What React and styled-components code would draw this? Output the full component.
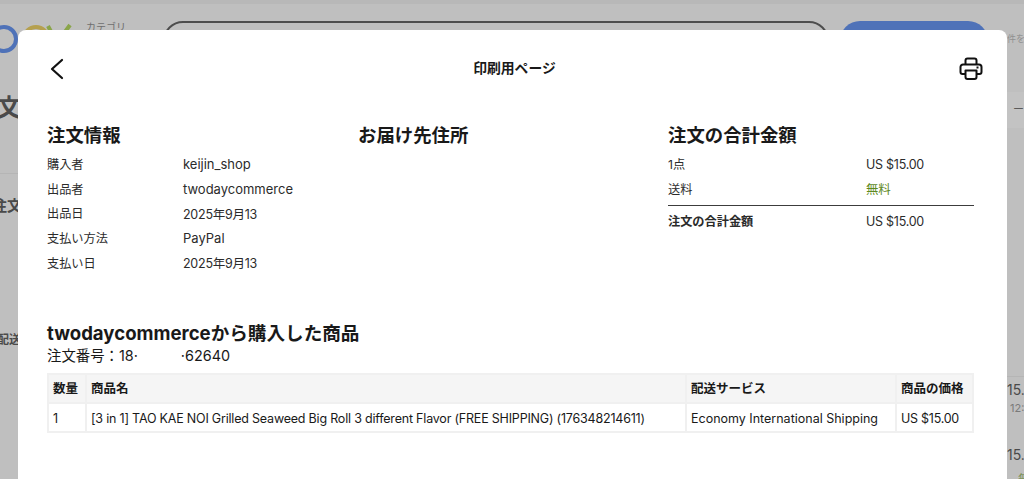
import React from "react";
import styled, { createGlobalStyle } from "styled-components";

const Global = createGlobalStyle`
  html, body { margin: 0; padding: 0; height: 100%; overflow: hidden; background: #bfbfbf; }
  body { font-family: Inter, "Noto Sans CJK JP", sans-serif; color: #191919; }
  * { box-sizing: border-box; }
`;

const Page = styled.div`
  position: relative;
  width: 1024px;
  height: 479px;
  overflow: hidden;
  background: #bfbfbf;
`;

const TopStrip = styled.div`
  height: 4px;
  background: #b8b8b8;
`;

const BgHeader = styled.div`
  display: flex;
  align-items: flex-start;
  height: 88px;
  padding-top: 17px;
`;

const BgLogo = styled.svg`
  width: 80px;
  height: 40px;
  flex: none;
  margin-right: 6px;
`;

const BgCategory = styled.div`
  width: 77px;
  font-size: 10px;
  line-height: 12px;
  color: #6e6e6e;
  flex: none;
`;

const BgSearch = styled.div`
  width: 666px;
  height: 40px;
  border: 2px solid #4d4d4d;
  border-radius: 20px;
  flex: none;
`;

const BgButton = styled.div`
  width: 148px;
  height: 40px;
  margin-left: 11px;
  background: #4f72b8;
  border-radius: 20px;
  flex: none;
`;

const BgHint = styled.div`
  margin: 11px 0 0 19px;
  font-size: 9px;
  line-height: 14px;
  color: #8f8f8f;
  white-space: nowrap;
  flex: none;
`;

const BgBody = styled.div`
  display: flex;
  justify-content: space-between;
`;

const BgLeft = styled.div`
  width: 18px;
  overflow: hidden;
  display: flex;
  flex-direction: column;
  color: #4a4a4a;
  font-weight: 700;
`;

const BgTitle = styled.div`
  font-size: 24px;
  line-height: 30px;
  margin: 1px 0 50px -3px;
  white-space: nowrap;
`;

const BgDivider = styled.div`
  height: 1px;
  background: #b5b5b5;
  flex: none;
`;

const BgLabel = styled.div`
  font-size: ${(p) => p.$size}px;
  line-height: 16px;
  margin-left: ${(p) => p.$indent}px;
  margin-top: ${(p) => p.$gap}px;
  white-space: nowrap;
`;

const BgRight = styled.div`
  width: 17px;
  overflow: hidden;
  white-space: nowrap;
  display: flex;
  flex-direction: column;
`;

const BgBand = styled.div`
  height: 36px;
  background: #c3c3c3;
  margin-bottom: 248px;
  font-size: 11px;
  line-height: 34px;
  color: #5a5a5a;
  text-align: right;
  flex: none;
`;

const BgRightLine = styled.div`
  margin-top: ${(p) => p.$gap}px;
  line-height: 16px;
  color: ${(p) => p.$color || "#4a4a4a"};
  font-size: ${(p) => p.$size || 14}px;
  padding-left: ${(p) => p.$indent || 0}px;
`;

const Modal = styled.section`
  position: absolute;
  left: 18px;
  top: 30px;
  width: 989px;
  height: 470px;
  background: #fff;
  border-radius: 8px 8px 0 0;
  padding: 0 33px 0 29px;
`;

const ModalBar = styled.header`
  display: flex;
  align-items: center;
  justify-content: space-between;
  height: 76px;
  padding-top: 1px;
`;

const IconButton = styled.div`
  width: 28px;
  height: 28px;
  display: flex;
  align-items: center;
  justify-content: center;
  margin-left: ${(p) => p.$ml || 0}px;
  margin-right: ${(p) => p.$mr || 0}px;
`;

const ModalTitle = styled.h1`
  margin: 0 0 1px -2px;
  font-size: 13.8px;
  line-height: 18px;
  font-weight: 700;
  color: #191919;
`;

const Columns = styled.div`
  display: grid;
  grid-template-columns: 311px 310px 306px;
  margin-top: 17px;
`;

const SectionTitle = styled.h2`
  margin: 0 0 5px;
  font-size: 18.4px;
  line-height: 24px;
  font-weight: 700;
  color: #191919;
`;

const Row = styled.div`
  display: grid;
  grid-template-columns: ${(p) => p.$cols};
  height: 24.6px;
  align-items: center;
  font-size: 12.2px;
  color: #2b2b2b;
  font-weight: ${(p) => (p.$bold ? 700 : 400)};
`;

const Value = styled.span`
  font-weight: 400;
  font-size: ${(p) => (p.$tight ? 12.5 : 13)}px;
  letter-spacing: ${(p) => (p.$tight ? -0.25 : 0)}px;
  color: ${(p) => p.$color || "#2b2b2b"};
`;

const Rule = styled.hr`
  margin: 4px 0 3px;
  border: 0;
  border-top: 1px solid #3c3c3c;
`;

const ProductsTitle = styled.h2`
  margin: 46px 0 0;
  font-size: 18.6px;
  line-height: 24px;
  font-weight: 700;
  color: #191919;
`;

const OrderNumber = styled.div`
  font-size: 14.4px;
  line-height: 20px;
  padding-top: 1px;
  color: #191919;
`;

const NumberGap = styled.span`
  display: inline-block;
  width: 43px;
`;

const Table = styled.table`
  margin-top: 7px;
  width: 925px;
  border-collapse: collapse;
  table-layout: fixed;
  font-size: 12.5px;
`;

const Th = styled.th`
  height: 29px;
  padding: 0 4px 2px;
  text-align: left;
  font-weight: 700;
  background: #f5f5f5;
  border: 2px solid #f0f0f0;
  color: #191919;
  white-space: nowrap;
`;

const Td = styled.td`
  height: 29px;
  padding: 3px 4px 0;
  text-align: left;
  background: #fff;
  border: 2px solid #f0f0f0;
  color: #191919;
  white-space: nowrap;
  letter-spacing: ${(p) => p.$spacing || 0}px;
`;

const info = [
  ["購入者", "keijin_shop"],
  ["出品者", "twodaycommerce"],
  ["出品日", "2025年9月13", true],
  ["支払い方法", "PayPal"],
  ["支払い日", "2025年9月13", true],
];

export default function App() {
  return (
    <Page>
      <Global />
      <TopStrip />
      <BgHeader>
        <BgLogo viewBox="0 0 80 40">
          <circle cx="4" cy="18" r="12" fill="none" stroke="#4f72b8" strokeWidth="4" />
          <circle cx="36" cy="18" r="12" fill="none" stroke="#b5a04f" strokeWidth="4" />
          <path d="M48 5l9 17 13-18" fill="none" stroke="#8aa54a" strokeWidth="4" />
        </BgLogo>
        <BgCategory>カテゴリ</BgCategory>
        <BgSearch />
        <BgButton />
        <BgHint>件を</BgHint>
      </BgHeader>
      <BgBody>
        <BgLeft>
          <BgTitle>文</BgTitle>
          <BgDivider />
          <BgLabel $gap={24} $size={15} $indent={-8}>注文</BgLabel>
          <BgLabel $gap={118} $size={12} $indent={-3}>配送</BgLabel>
        </BgLeft>
        <BgRight>
          <BgBand>ー</BgBand>
          <BgDivider />
          <BgRightLine $gap={5}>15.0</BgRightLine>
          <BgRightLine $gap={2} $size={11} $indent={3} $color="#7a7a7a">12:</BgRightLine>
          <BgRightLine $gap={31}>15.0</BgRightLine>
          <BgRightLine $gap={9} $size={12} $indent={11} $color="#7f9560">無料</BgRightLine>
        </BgRight>
      </BgBody>
      <Modal>
        <ModalBar>
          <IconButton $ml={-1}>
            <svg width="28" height="28" viewBox="0 0 28 28" fill="none" stroke="#111" strokeWidth="2.2" strokeLinecap="round" strokeLinejoin="round">
              <path d="M16 5L6 14l10 9" />
            </svg>
          </IconButton>
          <ModalTitle>印刷用ページ</ModalTitle>
          <IconButton $mr={-11}>
            <svg width="24" height="24" viewBox="0 0 24 24" fill="none" stroke="#111" strokeWidth="2" strokeLinejoin="round">
              <path d="M6.5 7.5V3.5a2 2 0 0 1 2-2h7a2 2 0 0 1 2 2v4" />
              <path d="M6.5 17H3.5a2 2 0 0 1-2-2V10a2.5 2.5 0 0 1 2.5-2.5h16a2.5 2.5 0 0 1 2.5 2.5v5a2 2 0 0 1-2 2h-3" />
              <path d="M6.5 13.5h11v6.5a2 2 0 0 1-2 2h-7a2 2 0 0 1-2-2z" />
              <path d="M17.5 10.5h2" />
            </svg>
          </IconButton>
        </ModalBar>
        <Columns>
          <div>
            <SectionTitle>注文情報</SectionTitle>
            {info.map(([k, v, tight]) => (
              <Row key={k} $cols="136px 1fr">
                <span>{k}</span>
                <Value $tight={tight}>{v}</Value>
              </Row>
            ))}
          </div>
          <div>
            <SectionTitle>お届け先住所</SectionTitle>
          </div>
          <div>
            <SectionTitle>注文の合計金額</SectionTitle>
            <Row $cols="198px 1fr">
              <span>1点</span>
              <Value $tight>US $15.00</Value>
            </Row>
            <Row $cols="198px 1fr">
              <span>送料</span>
              <Value $tight $color="#5f8a1e">無料</Value>
            </Row>
            <Rule />
            <Row $cols="198px 1fr" $bold>
              <span>注文の合計金額</span>
              <Value $tight>US $15.00</Value>
            </Row>
          </div>
        </Columns>
        <ProductsTitle>twodaycommerceから購入した商品</ProductsTitle>
        <OrderNumber>
          注文番号：18·<NumberGap />·62640
        </OrderNumber>
        <Table>
          <colgroup>
            <col style={{ width: 38 }} />
            <col style={{ width: 600 }} />
            <col style={{ width: 210 }} />
            <col style={{ width: 77 }} />
          </colgroup>
          <thead>
            <tr>
              <Th>数量</Th>
              <Th>商品名</Th>
              <Th>配送サービス</Th>
              <Th>商品の価格</Th>
            </tr>
          </thead>
          <tbody>
            <tr>
              <Td>1</Td>
              <Td $spacing={-0.2}>[3 in 1] TAO KAE NOI Grilled Seaweed Big Roll 3 different Flavor (FREE SHIPPING) (176348214611)</Td>
              <Td>Economy International Shipping</Td>
              <Td $spacing={-0.25}>US $15.00</Td>
            </tr>
          </tbody>
        </Table>
      </Modal>
    </Page>
  );
}
